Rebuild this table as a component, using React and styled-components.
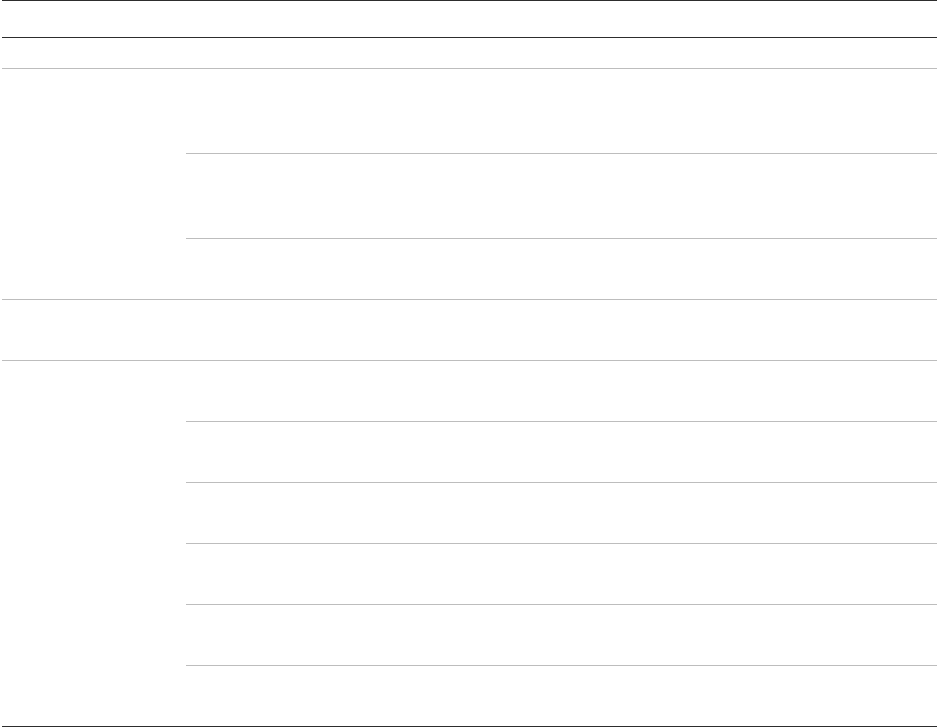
import React from "react";
import styled, { createGlobalStyle } from "styled-components";

const Global = createGlobalStyle`
  html, body {
    margin: 0;
    padding: 0;
    background: #ffffff;
    font-family: "Liberation Sans", Arial, sans-serif;
  }
`;

const Table = styled.div`
  margin-left: 2px;
  border-top: 1px solid #2d2d2d;
  border-bottom: 1px solid #2d2d2d;
`;

const HeaderRow = styled.div`
  height: 36px;
  border-bottom: 1px solid #2d2d2d;
`;

const SpacerRow = styled.div`
  height: 30px;
  border-bottom: 1px solid #bdbdbd;
`;

const Group = styled.div`
  display: grid;
  grid-template-columns: 184px 1fr;
  border-bottom: ${(p) => (p.last ? "none" : "1px solid #bdbdbd")};
`;

const LabelCell = styled.div``;

const SubRows = styled.div`
  display: flex;
  flex-direction: column;
`;

const SubRow = styled.div`
  height: ${(p) => p.h}px;
  & + & {
    border-top: 1px solid #bdbdbd;
  }
`;

const groups = [
  [84, 84, 60],
  [60],
  [60, 60, 60, 60, 60, 60],
];

export default function App() {
  return (
    <>
      <Global />
      <Table>
        <HeaderRow />
        <SpacerRow />
        {groups.map((rows, i) => (
          <Group key={i} last={i === groups.length - 1}>
            <LabelCell />
            <SubRows>
              {rows.map((h, j) => (
                <SubRow key={j} h={h} />
              ))}
            </SubRows>
          </Group>
        ))}
      </Table>
    </>
  );
}
